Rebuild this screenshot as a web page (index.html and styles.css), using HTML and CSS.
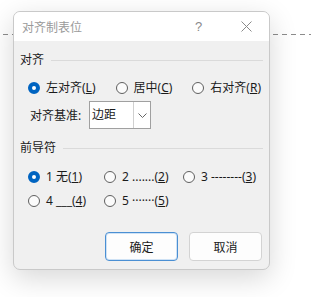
FILE: index.html
```html
<!DOCTYPE html>
<html lang="zh-CN">
<head>
    <meta charset="UTF-8">
    <title>对齐制表位</title>
    <link rel="stylesheet" href="styles.css">
</head>
<body>
    <!-- dashed tab-leader line behind the dialog -->
    <div class="tab-line"></div>

    <div class="dialog">
        <div class="title-bar">
            <span class="title">对齐制表位</span>
            <span class="help">?</span>
            <span class="close">
                <svg width="11" height="11" viewBox="0 0 11 11"><path d="M0.5 0.5 L10.5 10.5 M10.5 0.5 L0.5 10.5" stroke="#8a8a8a" stroke-width="1" fill="none"/></svg>
            </span>
        </div>

        <div class="body">
            <div class="group-title"><span>对齐</span><div class="rule"></div></div>
            <div class="align-row">
                <label class="radio"><span class="dot checked"></span>左对齐(<u>L</u>)</label>
                <label class="radio"><span class="dot"></span>居中(<u>C</u>)</label>
                <label class="radio"><span class="dot"></span>右对齐(<u>R</u>)</label>
            </div>
            <div class="basis-row">
                <span class="basis-label">对齐基准:</span>
                <div class="select">
                    <span class="select-text">边距</span>
                    <span class="select-arrow">
                        <svg width="9" height="5" viewBox="0 0 9 5"><path d="M0.5 0.5 L4.5 4.5 L8.5 0.5" stroke="#666" stroke-width="1" fill="none"/></svg>
                    </span>
                </div>
            </div>

            <div class="group-title second"><span>前导符</span><div class="rule"></div></div>
            <div class="leader-grid">
                <label class="radio"><span class="dot checked"></span>1 无(<u>1</u>)</label>
                <label class="radio"><span class="dot"></span>2 .......(<u>2</u>)</label>
                <label class="radio"><span class="dot"></span>3 --------(<u>3</u>)</label>
                <label class="radio"><span class="dot"></span>4 ___(<u>4</u>)</label>
                <label class="radio"><span class="dot"></span>5 ·······(<u>5</u>)</label>
            </div>

            <div class="buttons">
                <button class="btn primary">确定</button>
                <button class="btn">取消</button>
            </div>
        </div>
    </div>
</body>
</html>
```

FILE: styles.css
```css
body {
    margin: 0;
    background-color: #ffffff;
    font-family: "Noto Sans", "Noto Sans CJK SC", sans-serif;
    font-size: 12px;
    color: #1b1b1b;
    position: relative;
    height: 297px;
    overflow: hidden;
}
.tab-line {
    position: absolute;
    top: 34px;
    left: 3px;
    right: 0;
    height: 1px;
    background: repeating-linear-gradient(to right, #8c8c8c 0 5px, transparent 5px 9px);
}
.dialog {
    position: relative; /* sits above the dashed line */
    margin: 11px 0 0 13px;
    width: 257px;
    box-sizing: border-box;
    border: 1px solid #c9c9c9;
    border-radius: 7px;
    overflow: hidden;
    background-color: #f0f0f0;
    box-shadow: 0 8px 28px rgba(0,0,0,0.16);
}
.title-bar {
    height: 29px;
    background-color: #ffffff;
    display: flex;
    align-items: center;
    padding-left: 8px;
}
.title {
    flex: 1;
    color: #9a9a9a;
    font-size: 12px;
}
.help {
    color: #8a8a8a;
    font-size: 13px;
    width: 12px;
    margin-right: 34px;
    font-family: "Liberation Sans", sans-serif;
}
.close {
    display: flex;
    margin-right: 17px;
}
.body {
    padding: 11px 6px 8px 6px;
}
.group-title {
    display: flex;
    align-items: center;
    height: 16px;
    line-height: 16px;
}
.group-title.second {
    margin-top: 11px;
}
.rule {
    flex: 1;
    height: 1px;
    background-color: #dadada;
    margin-left: 7px;
}
.radio {
    display: flex;
    align-items: center;
    height: 16px;
    line-height: 16px;
    white-space: nowrap;
}
.dot {
    flex-shrink: 0;
    width: 12px;
    height: 12px;
    box-sizing: border-box;
    border: 1px solid #5f5f5f;
    border-radius: 50%;
    margin-right: 6px;
    background-color: #fbfbfb;
}
.dot.checked {
    border: 4px solid #0064c1;
    background-color: #ffffff;
}
.align-row {
    display: flex;
    gap: 20px;
    margin-top: 12px;
    padding-left: 8px;
}
.basis-row {
    display: flex;
    align-items: center;
    margin-top: 5px;
    padding-left: 10px;
}
.basis-label {
    width: 59px;
}
.select {
    display: flex;
    width: 62px;
    height: 28px;
    box-sizing: border-box;
    border: 1px solid #a0a0a0;
    background-color: #ffffff;
}
.select-text {
    flex: 1;
    line-height: 26px;
    padding-left: 2px;
}
.select-arrow {
    width: 16px;
    border-left: 1px solid #d0d0d0;
    display: flex;
    align-items: center;
    justify-content: center;
}
.leader-grid {
    display: grid;
    grid-template-columns: 76px 79px auto;
    row-gap: 8px;
    margin-top: 13px;
    padding-left: 8px;
}
.buttons {
    display: flex;
    justify-content: flex-end;
    gap: 11px;
    margin-top: 23px;
    padding-right: 1px;
}
.btn {
    width: 73px;
    height: 29px;
    background-color: #fdfdfd;
    border: 1px solid #d3d3d3;
    border-radius: 4px;
    font-family: "Noto Sans CJK SC", sans-serif;
    font-size: 12px;
    color: #1b1b1b;
    padding: 0;
}
.btn.primary {
    border: 1px solid #4a8fd3;
    box-shadow: inset 0 0 0 1px #cfe2f5;
}
```
